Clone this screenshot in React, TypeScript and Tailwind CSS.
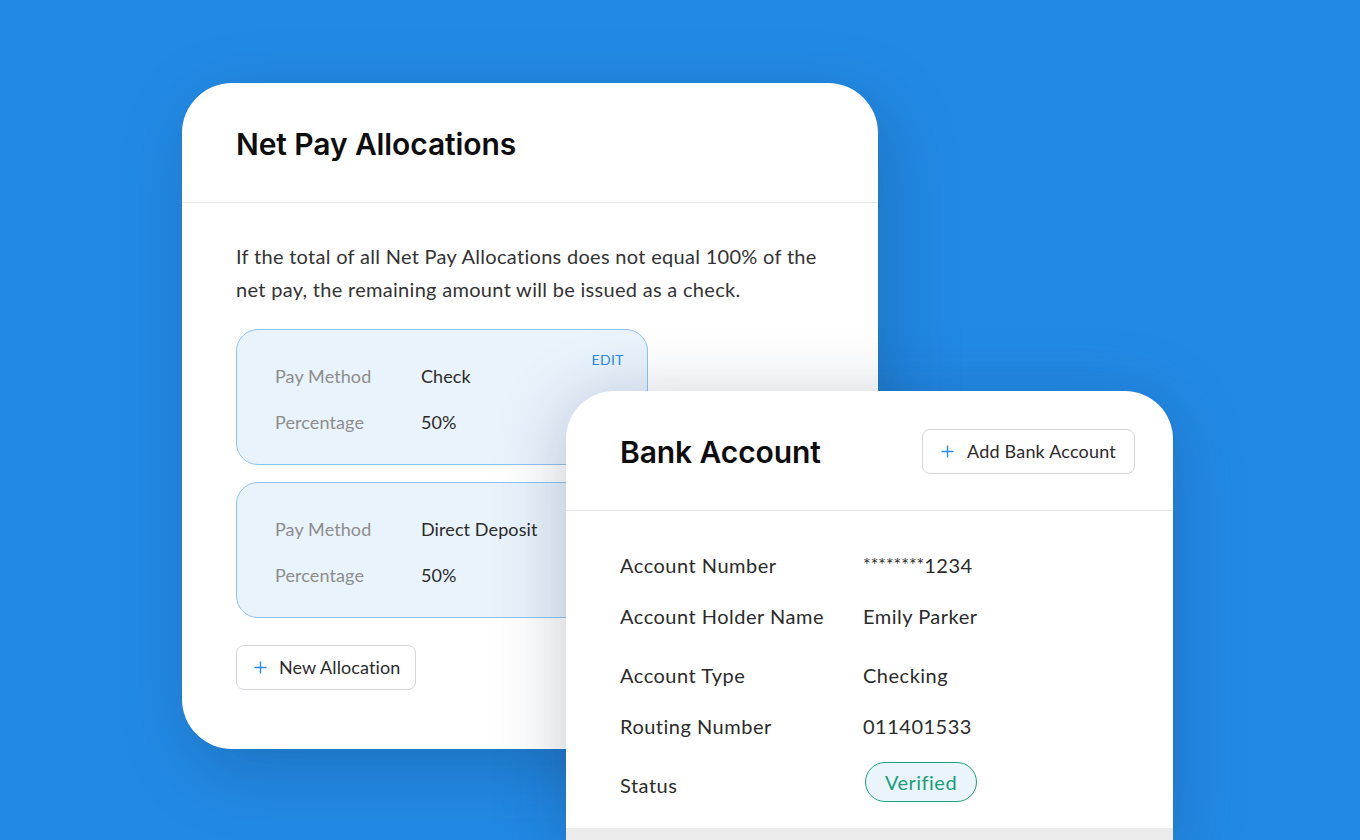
import React from "react";

const sans = { fontFamily: "Lato, 'Open Sans', sans-serif" };
const head = { fontFamily: "Inter, 'Noto Sans', sans-serif" };

function Plus() {
  return (
    <svg width="13" height="13" viewBox="0 0 13 13" className="shrink-0">
      <path d="M6.5 0.5v12M0.5 6.5h12" stroke="#2b8be0" strokeWidth="1.4" fill="none" />
    </svg>
  );
}

function Allocation({ method, pct, edit }: { method: string; pct: string; edit?: boolean }) {
  return (
    <div className="relative rounded-[22px] border border-[#8fc3ef] bg-[#e9f3fc] pl-[38px] pt-[23px] pb-[21px] h-[136px]">
      {edit && (
        <div className="absolute right-[23px] top-[21px] text-[14px] leading-[18px] text-[#2b8be0] tracking-[0.4px]">EDIT</div>
      )}
      <div className="flex items-center h-[46px] text-[18px] tracking-[0.1px]">
        <div className="w-[146px] text-[#8d8d8d]">Pay Method</div>
        <div className="text-[#2b2b2b]">{method}</div>
      </div>
      <div className="flex items-center h-[46px] text-[18px] tracking-[0.1px]">
        <div className="w-[146px] text-[#8d8d8d]">Percentage</div>
        <div className="text-[#2b2b2b]">{pct}</div>
      </div>
    </div>
  );
}

function Row({ label, children, mt }: { label: string; children: React.ReactNode; mt: string }) {
  return (
    <div className={`flex items-center h-[28px] ${mt}`}>
      <div className="w-[243px] text-[#2b2b2b]">{label}</div>
      <div className="text-[#2b2b2b]">{children}</div>
    </div>
  );
}

export default function App() {
  return (
    <div className="relative w-full h-[840px] overflow-hidden bg-[#228ae5]" style={sans}>
      <div className="pt-[83px] pl-[182px]">
        <div className="w-[696px] h-[666px] rounded-[50px] bg-white shadow-[10px_20px_70px_rgba(20,50,90,0.28)] overflow-hidden">
          <div className="h-[120px] flex items-center px-[54px] pt-[4px] border-b border-[#e4e8ed]">
            <h1 className="text-[30px] font-semibold text-[#0d0d0d] tracking-[-0.1px]" style={head}>Net Pay Allocations</h1>
          </div>
          <div className="px-[54px] pt-[37px]">
            <p className="text-[20px] leading-[33px] text-[#333] tracking-[0.3px]">
              If the total of all Net Pay Allocations does not equal 100% of the net pay, the remaining amount will be issued as a check.
            </p>
            <div className="w-[412px] mt-[23px] flex flex-col gap-[17px]">
              <Allocation method="Check" pct="50%" edit />
              <Allocation method="Direct Deposit" pct="50%" />
            </div>
            <button className="mt-[27px] h-[45px] pl-[17px] pr-[15px] flex items-center gap-[12px] rounded-[8px] border border-[#d3d6da] bg-white text-[18px] text-[#2b2b2b] tracking-[0.1px]">
              <Plus />
              <span>New Allocation</span>
            </button>
          </div>
        </div>
      </div>

      <div className="absolute left-[566px] top-[391px] w-[607px] h-[460px] rounded-t-[48px] bg-white shadow-[0_10px_70px_rgba(20,40,80,0.25)] overflow-hidden flex flex-col">
        <div className="h-[120px] shrink-0 flex items-center justify-between pl-[54px] pr-[38px] pt-[2px] border-b border-[#e4e8ed]">
          <h2 className="text-[30px] font-semibold text-[#0d0d0d] tracking-[-0.1px] pt-[2px]" style={head}>Bank Account</h2>
          <button className="h-[45px] w-[213px] flex items-center justify-center gap-[13px] rounded-[8px] border border-[#d3d6da] bg-white text-[18px] text-[#2b2b2b] tracking-[0.2px]">
            <Plus />
            <span>Add Bank Account</span>
          </button>
        </div>
        <div className="pl-[54px] text-[20px] tracking-[0.5px]">
          <Row label="Account Number" mt="mt-[40px]">
            <span className="text-[18px] tracking-[0px] align-[2px]">********</span>
            <span>1234</span>
          </Row>
          <Row label="Account Holder Name" mt="mt-[23px]">Emily Parker</Row>
          <Row label="Account Type" mt="mt-[31px]">Checking</Row>
          <Row label="Routing Number" mt="mt-[23px]">011401533</Row>
          <div className="flex items-center h-[40px] mt-[22px]">
            <div className="w-[245px] text-[#2b2b2b] pt-[6px]">Status</div>
            <div className="h-[40px] w-[112px] rounded-full border border-[#1fa27c] bg-[#e9f4fb] flex items-center justify-center text-[#1a9e78]">Verified</div>
          </div>
        </div>
        <div className="mt-[26px] h-[20px] bg-[#ebebeb]" />
      </div>
    </div>
  );
}
